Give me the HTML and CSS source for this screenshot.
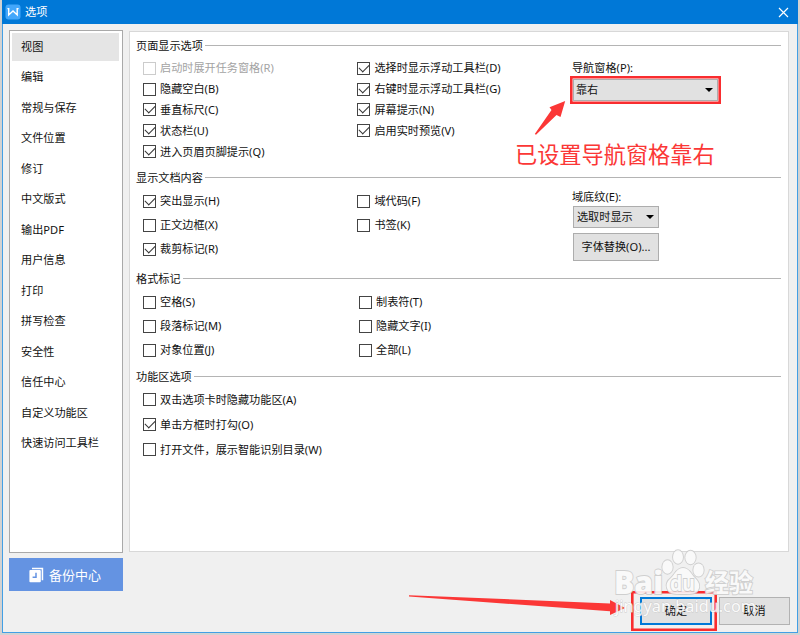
FILE: index.html
```html
<!DOCTYPE html>
<html lang="zh-CN">
<head>
<meta charset="utf-8">
<title>选项</title>
<link rel="stylesheet" href="styles.css">
</head>
<body>
<div class="window">
  <header class="titlebar">
    <svg class="logo" width="16" height="16" viewBox="0 0 16 16"><rect x=".5" y=".5" width="15" height="15" rx="3" fill="#43a7fb"/><path d="M2.4 4.6h1.3v6.3L8 7l4.2 3.9V4.6h1.4" fill="none" stroke="#fff" stroke-width="1.4"/></svg>
    <span class="title">选项</span>
    <svg class="close" width="11" height="11" viewBox="0 0 11 11"><path d="M1 1l9 9M10 1l-9 9" stroke="#fff" stroke-width="1.15"/></svg>
  </header>
  <main class="content">
    <aside class="side">
      <nav class="nav">
        <a class="item active">视图</a>
        <a class="item">编辑</a>
        <a class="item">常规与保存</a>
        <a class="item">文件位置</a>
        <a class="item">修订</a>
        <a class="item">中文版式</a>
        <a class="item">输出PDF</a>
        <a class="item">用户信息</a>
        <a class="item">打印</a>
        <a class="item">拼写检查</a>
        <a class="item">安全性</a>
        <a class="item">信任中心</a>
        <a class="item">自定义功能区</a>
        <a class="item">快速访问工具栏</a>
      </nav>
      <button class="backup">
        <svg width="15" height="16" viewBox="0 0 15 16"><path d="M3 .8h11.2v12.4h-1.5V2.3H3z" fill="#fff"/><rect x=".4" y="3" width="11.4" height="12.3" rx="1" fill="#fff"/><path d="M7 5.8v4.4H3.6" fill="none" stroke="#6493e2" stroke-width="1.5"/></svg>
        <span>备份中心</span>
      </button>
    </aside>
    <section class="right">
      <div class="panel">
        <section class="group page">
          <h2>页面显示选项</h2>
          <div class="cols">
            <div class="col">
              <label class="check disabled"><i class="box"></i>启动时展开任务窗格(R)</label>
              <label class="check"><i class="box"></i>隐藏空白(B)</label>
              <label class="check"><i class="box on"></i>垂直标尺(C)</label>
              <label class="check"><i class="box on"></i>状态栏(U)</label>
              <label class="check"><i class="box on"></i>进入页眉页脚提示(Q)</label>
            </div>
            <div class="col">
              <label class="check"><i class="box on"></i>选择时显示浮动工具栏(D)</label>
              <label class="check"><i class="box on"></i>右键时显示浮动工具栏(G)</label>
              <label class="check"><i class="box on"></i>屏幕提示(N)</label>
              <label class="check"><i class="box on"></i>启用实时预览(V)</label>
            </div>
            <div class="fields">
              <span class="caption">导航窗格(P):</span>
              <div class="marked"><div class="select wide">靠右<i class="caret"></i></div></div>
            </div>
          </div>
        </section>
        <section class="group doc">
          <h2>显示文档内容</h2>
          <div class="cols">
            <div class="col">
              <label class="check"><i class="box on"></i>突出显示(H)</label>
              <label class="check"><i class="box"></i>正文边框(X)</label>
              <label class="check"><i class="box on"></i>裁剪标记(R)</label>
            </div>
            <div class="col">
              <label class="check"><i class="box"></i>域代码(F)</label>
              <label class="check"><i class="box"></i>书签(K)</label>
            </div>
            <div class="fields">
              <span class="caption">域底纹(E):</span>
              <div class="select">选取时显示<i class="caret"></i></div>
              <button class="font-btn">字体替换(O)...</button>
            </div>
          </div>
        </section>
        <section class="group format">
          <h2>格式标记</h2>
          <div class="cols">
            <div class="col">
              <label class="check"><i class="box"></i>空格(S)</label>
              <label class="check"><i class="box"></i>段落标记(M)</label>
              <label class="check"><i class="box"></i>对象位置(J)</label>
            </div>
            <div class="col">
              <label class="check"><i class="box"></i>制表符(T)</label>
              <label class="check"><i class="box"></i>隐藏文字(I)</label>
              <label class="check"><i class="box"></i>全部(L)</label>
            </div>
          </div>
        </section>
        <section class="group ribbon">
          <h2>功能区选项</h2>
          <div class="cols">
            <div class="col">
              <label class="check"><i class="box"></i>双击选项卡时隐藏功能区(A)</label>
              <label class="check"><i class="box on"></i>单击方框时打勾(O)</label>
              <label class="check"><i class="box"></i>打开文件，展示智能识别目录(W)</label>
            </div>
          </div>
        </section>
      </div>
      <footer class="actions">
        <div class="ok-mark"><button class="btn ok">确定</button></div>
        <button class="btn">取消</button>
      </footer>
    </section>
  </main>
</div>
<span class="note">已设置导航窗格靠右</span>
<svg class="overlay" width="800" height="635" viewBox="0 0 800 635">
  <g fill="#fb3736">
    <path d="M534.8 134L551.5 110 549.5 107.2 565.2 101 560.5 117 556.5 115 536 134.8z"/>
    <path d="M409 595.2L610 603.5V600L625 608 610 615V611.2L409 596.6z"/>
  </g>
  <g class="mark">
    <text class="brand" x="614" y="593.5" textLength="49" lengthAdjust="spacingAndGlyphs">Bai</text>
    <ellipse cx="667.5" cy="567" rx="5.2" ry="6.8"/>
    <ellipse cx="678" cy="557" rx="5" ry="6.8"/>
    <ellipse cx="690.5" cy="557.5" rx="5.2" ry="6.8"/>
    <ellipse cx="698.5" cy="570" rx="5.2" ry="6.6"/>
    <path d="M683 568c-6 0-8 6-12 10-4 3-5 7-4 10 2 7 9 6 16 6s14 1 16-6c1-4-1-7-4-10-4-4-6-10-12-10z"/>
    <text class="du" x="670" y="591" textLength="25" lengthAdjust="spacingAndGlyphs">du</text>
    <text class="cn" x="705" y="592" textLength="48" lengthAdjust="spacingAndGlyphs">经验</text>
  </g>
  <text class="url" x="615" y="612" textLength="141" lengthAdjust="spacingAndGlyphs">jingyan.baidu.com</text>
</svg>
</body>
</html>
```
FILE: styles.css
```css
* { box-sizing: border-box; }
body {
  margin: 0;
  width: 800px;
  height: 635px;
  overflow: hidden;
  position: relative;
  background: #d2d2d2;
  color: #111;
  font: 11.15px/18px "Noto Sans", "Noto Sans CJK SC", sans-serif;
}
button { font: inherit; color: inherit; padding: 0; border-radius: 0; }
.window {
  margin-left: 2px;
  width: 796px;
  height: 633px;
  display: flex;
  flex-direction: column;
  background: #f0f0f0;
  border: 1px solid #429fe5;
  border-top: 0;
}
.titlebar {
  height: 24px;
  margin: 0 -1px;
  padding: 0 9px 0 3px;
  display: flex;
  align-items: center;
  background: #0078d7;
  color: #fff;
}
.title { margin-left: 4px; }
.close { margin-left: auto; }
.content { flex: 1; display: flex; gap: 6px; padding: 6px 7px 0 6px; }
.side { width: 114px; }
.nav {
  height: 523px;
  padding: 2px 3px 0 2px;
  border: 1px solid #a9a9a9;
  background: #fff;
}
.item {
  display: flex;
  align-items: center;
  height: 27.5px;
  margin-bottom: 3px;
  padding-left: 9px;
}
.active { background: #e5e5e5; }
.backup {
  width: 114px;
  height: 33px;
  margin-top: 5px;
  padding-right: 2px;
  display: flex;
  align-items: center;
  justify-content: center;
  gap: 5px;
  border: 0;
  background: #6493e2;
  color: #fff;
  font-size: 13px;
}
.right { flex: 1; margin-top: 1px; display: flex; flex-direction: column; }
.panel {
  width: 660px;
  height: 521px;
  padding: 5px 7px 0 6px;
  border: 1px solid #d8d8d8;
  background: #fff;
}
.group h2 {
  margin: 0;
  height: 18px;
  display: flex;
  align-items: center;
  gap: 2px;
  font: inherit;
}
.group h2::after { content: ""; flex: 1; height: 1px; margin-top: -1px; background: #b4b4b4; }
.cols {
  display: grid;
  grid-template-columns: 214.4px 214.6px 1fr;
  align-items: start;
  padding: 2px 0 0 7px;
}
.col { display: grid; grid-auto-rows: 24px; }
.page { height: 132px; }
.page .cols { padding-top: 3px; }
.page .col { grid-auto-rows: 20.8px; }
.doc { height: 101px; }
.format { height: 98px; }
.format .cols { grid-template-columns: 216px 1fr; }
.ribbon .cols { grid-template-columns: 1fr; padding-top: 1px; }
.ribbon .col { grid-auto-rows: 25px; }
.check { display: flex; align-items: center; gap: 4px; white-space: nowrap; }
.box {
  width: 13px;
  height: 13px;
  display: grid;
  place-items: center;
  border: 1px solid #444;
  background: #fff;
}
.box.on::after {
  content: "";
  width: 9px;
  height: 5px;
  margin-top: -3px;
  border: solid #333;
  border-width: 0 0 1.2px 1.2px;
  transform: rotate(-45deg) scaleX(.95);
}
.disabled { color: #a3a3a3; }
.disabled .box { border-color: #ccc; }
.fields { display: flex; flex-direction: column; align-items: flex-start; }
.page .caption { margin-top: 1px; }
.doc .caption { margin-top: -1px; }
.marked {
  width: 151px;
  height: 28px;
  margin: -1px 0 0 -2px;
  padding: 1px 1px 0;
  border: 2px solid #f92d2f;
  box-shadow: inset 0 0 0 .6px #f92d2f;
  background: #fff;
}
.select {
  width: 86px;
  height: 22px;
  padding: 0 4px 0 3px;
  display: flex;
  align-items: center;
  justify-content: space-between;
  border: 1px solid #adadad;
  background: #e1e1e1;
}
.doc .select { margin: 0 0 5px 1px; }
.select.wide { width: 145px; padding: 0 4px 0 2px; }
.caret {
  border: 4px solid transparent;
  border-top: 4px solid #000;
  border-bottom: 0;
}
.font-btn {
  width: 86px;
  height: 28px;
  margin-left: 1px;
  border: 1px solid #adadad;
  background: #e1e1e1;
}
.actions { display: flex; justify-content: flex-end; gap: 2px; margin-top: 39px; }
.ok-mark {
  width: 86px;
  height: 40px;
  padding: 4px 5px 0 7px;
  border: 2px solid #f92d2f;
  box-shadow: inset 0 0 0 .6px #f92d2f;
}
.btn {
  width: 71px;
  height: 28px;
  margin-top: 6px;
  border: 1px solid #b2b2b2;
  background: #e1e1e1;
}
.btn.ok { display: block; width: 72px; margin: 0; border: 2px solid #0078d7; }
.note {
  position: absolute;
  left: 515px;
  top: 139px;
  font-size: 22.2px;
  line-height: 32px;
  color: #fb3736;
  white-space: nowrap;
}
.overlay { position: absolute; left: 0; top: 0; pointer-events: none; }
.mark { fill: #fafafa; stroke: #ccc; stroke-width: 1.8px; paint-order: stroke; opacity: .9; }
.brand { font: 800 32px "Open Sans", sans-serif; }
.du { font: 700 22px "Open Sans", sans-serif; }
.cn { font: 700 25px "Noto Sans CJK SC", sans-serif; }
.url {
  font: 15.5px "Noto Sans", sans-serif;
  fill: #fff;
  stroke: #c8c8c8;
  stroke-width: .8px;
  paint-order: stroke;
  opacity: .85;
}
```
